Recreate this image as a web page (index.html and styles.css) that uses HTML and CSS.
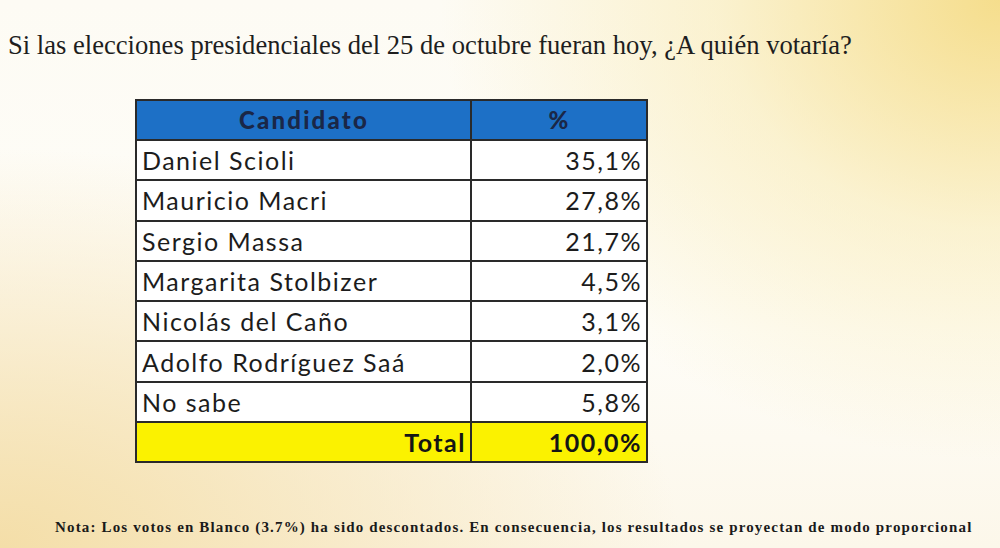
FILE: index.html
```html
<!DOCTYPE html>
<html lang="es">
<head>
<meta charset="utf-8">
<link rel="stylesheet" href="styles.css">
</head>
<body>
<div class="page">
  <h1 class="title">Si las elecciones presidenciales del 25 de octubre fueran hoy, ¿A quién votaría?</h1>
  <table class="poll">
    <thead>
      <tr><th class="c-name">Candidato</th><th class="c-pct">%</th></tr>
    </thead>
    <tbody>
      <tr><td class="c-name">Daniel Scioli</td><td class="c-pct">35,1%</td></tr>
      <tr><td class="c-name">Mauricio Macri</td><td class="c-pct">27,8%</td></tr>
      <tr><td class="c-name">Sergio Massa</td><td class="c-pct">21,7%</td></tr>
      <tr><td class="c-name">Margarita Stolbizer</td><td class="c-pct">4,5%</td></tr>
      <tr><td class="c-name">Nicolás del Caño</td><td class="c-pct">3,1%</td></tr>
      <tr><td class="c-name">Adolfo Rodríguez Saá</td><td class="c-pct">2,0%</td></tr>
      <tr><td class="c-name">No sabe</td><td class="c-pct">5,8%</td></tr>
    </tbody>
    <tfoot>
      <tr><td class="c-name total-label">Total</td><td class="c-pct">100,0%</td></tr>
    </tfoot>
  </table>
  <p class="note">Nota: Los votos en Blanco (3.7%) ha sido descontados. En consecuencia, los resultados se proyectan de modo proporcional</p>
</div>
</body>
</html>
```

FILE: styles.css
```css
html, body {
  margin: 0;
  padding: 0;
}
body {
  width: 1000px;
  height: 548px;
  overflow: hidden;
  background:
    radial-gradient(ellipse 560px 460px at 1000px 0px, rgba(245, 220, 135, 0.95), rgba(248, 232, 170, 0.5) 50%, rgba(255, 255, 255, 0) 100%),
    radial-gradient(ellipse 680px 400px at 0px 548px, rgba(244, 222, 168, 1), rgba(246, 228, 185, 0.6) 55%, rgba(255, 255, 255, 0) 100%),
    linear-gradient(180deg, #fdfbf4 0%, #fefdf8 60%, #fcf7ea 100%);
}
.page {
  display: flex;
  flex-direction: column;
  align-items: flex-start;
  padding: 30px 0 0 8px;
  height: 100%;
  box-sizing: border-box;
}
.title {
  margin: 0;
  font-family: "Liberation Serif", "Times New Roman", serif;
  font-weight: normal;
  font-size: 26.6px;
  line-height: 30px;
  color: #1e1e1e;
}
.poll {
  margin: 39px 0 0 127px;
  border-collapse: collapse;
  font-family: Lato, "Open Sans", sans-serif;
  font-size: 25px;
  letter-spacing: 1.5px;
  color: #1c1c1c;
  border: 2px solid #2a2a2a;
}
.poll th, .poll td {
  border: 2px solid #2a2a2a;
  height: 38.3px;
  padding: 0 4px 0 5px;
  line-height: 38px;
}
.poll .c-name {
  width: 324px;
  text-align: left;
}
.poll .c-pct {
  width: 165px;
  text-align: right;
}
.poll thead th.c-name,
.poll thead th.c-pct {
  background: #1d70c6;
  color: #1a2747;
  font-weight: 900;
  font-size: 24px;
  letter-spacing: 2.2px;
  text-align: center;
  height: 37px;
}
.poll tbody td {
  background: #ffffff;
}
.poll tfoot td {
  background: #fbf200;
  font-weight: bold;
  color: #151515;
}
.poll tfoot td.total-label {
  text-align: right;
}
.note {
  margin: 56px 0 0 47px;
  font-family: "Liberation Serif", "Times New Roman", serif;
  font-weight: bold;
  font-size: 15px;
  letter-spacing: 1.15px;
  color: #1a1a1a;
  white-space: nowrap;
}
```
